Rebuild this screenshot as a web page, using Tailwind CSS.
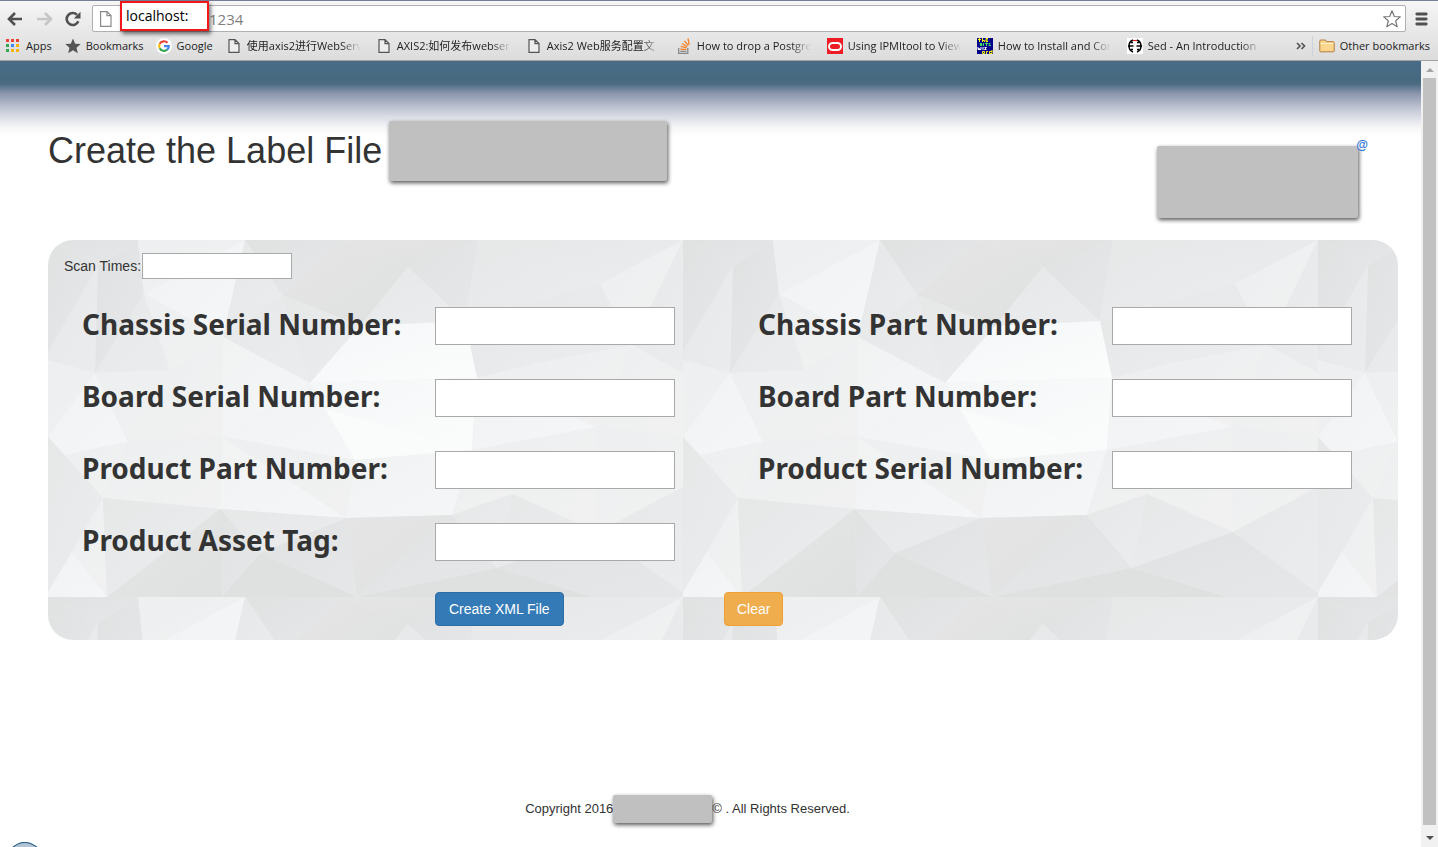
<!DOCTYPE html>
<html lang="en">
<head>
<meta charset="utf-8">
<meta name="viewport" content="width=device-width, initial-scale=1">
<title>Create the Label File</title>
<script src="https://cdn.jsdelivr.net/npm/@tailwindcss/browser@4"></script>
</head>
<body class="flex min-h-screen flex-col bg-white font-['Liberation_Sans',Arial,sans-serif] text-sm text-[#333]">

<!-- Browser toolbar -->
<header class="border-b border-[#a3a3a3] bg-linear-to-b from-[#f6f6f6] to-[#dcdcdc] font-['Open_Sans','Noto_Sans_CJK_SC',sans-serif] text-[11px] text-[#222]">
  <div class="h-px bg-[#75809a]"></div>
  <div class="relative flex h-[34px] items-center pt-px pr-2 pl-[7px]">
    <button aria-label="Back" class="mr-3.5 h-4 w-4"><svg viewBox="0 0 16 16" class="h-4 w-4" fill="none" stroke="#505050" stroke-width="2.6"><path d="M15 8H2.5M8 2L2 8l6 6"/></svg></button>
    <button aria-label="Forward" class="mr-3 h-4 w-4"><svg viewBox="0 0 16 16" class="h-4 w-4" fill="none" stroke="#c6c6c6" stroke-width="2.6"><path d="M0 8h13M8 2l6 6-6 6"/></svg></button>
    <button aria-label="Reload" class="mr-[11px] h-4 w-4"><svg viewBox="0 0 16 16" class="h-4 w-4"><path d="M13.3 10.3A6 6 0 1 1 12 3.8" fill="none" stroke="#505050" stroke-width="2.6"/><path d="M15.500 .8v6.700H8.800z" fill="#505050"/></svg></button>
    <div class="flex h-[27px] flex-1 items-center rounded-xs border border-[#b0b0b0] bg-white pr-1 pl-1.5">
      <svg viewBox="0 0 14 16" class="h-4 w-3.5 shrink-0" fill="#fff" stroke="#8a8a8a" stroke-width="1.200"><path d="M1.600.6h6.400l4 4v10.800H1.600zM8 .6v4h4"/></svg>
      <input aria-label="Address" type="text" value="1234" class="ml-[96px] h-6 min-w-0 flex-1 bg-transparent text-[15px] text-[#808080] outline-none">
      <button aria-label="Bookmark this page" class="h-[18px] w-[18px]"><svg viewBox="0 0 18 18" class="h-[18px] w-[18px]" fill="#fff" stroke="#777" stroke-width="1.200" stroke-linejoin="round"><path d="M9 .8l2.300 5.700 6 .4-4.600 3.900 1.500 6L9 13.500l-5.200 3.300 1.500-6L.7 6.900l6-.4z"/></svg></button>
    </div>
    <button aria-label="Menu" class="ml-2 h-4 w-4"><svg viewBox="0 0 16 16" class="h-4 w-4" stroke="#505050" stroke-width="2.800" stroke-linecap="round"><path d="M2.800 3h9.400M2.800 8h9.400M2.800 13h9.400"/></svg></button>
    <div class="absolute top-0 left-[120px] h-[30px] w-[89px] border-2 border-[#f01818] bg-white pl-1 text-sm leading-[26px] text-black shadow-[2px_3px_4px_#0008]">localhost:</div>
  </div>
  <nav aria-label="Bookmarks" class="flex h-[25px] items-center pr-2 pb-1 pl-1.5 leading-4 whitespace-nowrap">
    <a href="#" class="mr-[13px] flex items-center gap-1.5"><svg viewBox="0 0 14 14" class="h-3.5 w-3.5"><path d="M0 0h3v3H0zM5 0h3v3H5zM10 0h3v3h-3z" fill="#ea4335"/><path d="M0 5h3v3H0z" fill="#34a853"/><path d="M5 5h3v3H5z" fill="#4285f4"/><path d="M10 5h3v3h-3zM5 10h3v3H5zM10 10h3v3h-3z" fill="#f5b400"/><path d="M0 10h3v3H0z" fill="#34a853"/></svg>Apps</a>
    <a href="#" class="mr-3 flex items-center gap-[5px]"><svg viewBox="0 0 16 16" class="h-4 w-4" fill="#555"><path d="M8 .5l2.200 5.200 5.500.4-4.200 3.600 1.300 5.500L8 12.300l-4.800 2.900 1.300-5.500L.3 6.100l5.500-.4z"/></svg>Bookmarks</a>
    <a href="#" class="mr-3.5 flex items-center gap-[5px]"><svg viewBox="0 0 48 48" class="h-4 w-4"><circle cx="24" cy="24" r="24" fill="#fff"/><g fill="none" stroke-width="6.500"><path d="M34.500 14.500A14.500 14.500 0 0 0 11 17.500" stroke="#ea4335"/><path d="M11.200 17a14.500 14.500 0 0 0 0 14" stroke="#fbbc05"/><path d="M11 30.500a14.500 14.500 0 0 0 22.500 4.500" stroke="#34a853"/><path d="M24 24.500h14.500a14.500 14.500 0 0 1-5 10.500" stroke="#4285f4"/></g></svg>Google</a>
    <a href="#" class="mr-4 flex w-[134px] items-center gap-1.5 overflow-hidden mask-r-from-85%"><svg viewBox="0 0 14 16" class="h-4 w-3.5 shrink-0" fill="#eee" stroke="#555" stroke-width="1.200"><path d="M2 1.600h6l4 4v8.800H2zM8 1.600v4h4"/></svg>使用axis2进行WebServ</a>
    <a href="#" class="mr-4 flex w-[134px] items-center gap-1.5 overflow-hidden mask-r-from-85%"><svg viewBox="0 0 14 16" class="h-4 w-3.5 shrink-0" fill="#eee" stroke="#555" stroke-width="1.200"><path d="M2 1.600h6l4 4v8.800H2zM8 1.600v4h4"/></svg>AXIS2:如何发布webser</a>
    <a href="#" class="mr-4 flex w-[134px] items-center gap-1.5 overflow-hidden mask-r-from-85%"><svg viewBox="0 0 14 16" class="h-4 w-3.5 shrink-0" fill="#eee" stroke="#555" stroke-width="1.200"><path d="M2 1.600h6l4 4v8.800H2zM8 1.600v4h4"/></svg>Axis2 Web服务配置文</a>
    <a href="#" class="mr-4 flex w-[134px] items-center gap-1.5 overflow-hidden mask-r-from-85%"><svg viewBox="0 0 14 16" class="h-4 w-3.5 shrink-0" fill="none" stroke-width="1.300"><path d="M1.700 10v5.300h9.100V10M3.300 13.300h6" stroke="#888"/><path d="M3.300 11.200l6 .5M3.700 8.400l5.900 1.500M5 5.500l5.200 3.200M7.400 2.800l3.900 4.700M11 .5l1.200 6" stroke="#f48024"/></svg>How to drop a Postgre</a>
    <a href="#" class="mr-4 flex w-[134px] items-center gap-[5px] overflow-hidden mask-r-from-85%"><svg viewBox="0 0 16 16" class="h-4 w-4 shrink-0"><path d="M0 0h16v16H0z" fill="#ee1c24"/><rect x="2" y="5" width="12" height="7" rx="3.500" fill="none" stroke="#fff" stroke-width="2"/></svg>Using IPMItool to View</a>
    <a href="#" class="mr-4 flex w-[134px] items-center gap-[5px] overflow-hidden mask-r-from-85%"><svg viewBox="0 0 16 16" class="h-4 w-4 shrink-0" fill="none"><path d="M0 0h16v16H0z" fill="#00008b"/><path d="M1 1.500h3M2.500 0v4M5.500 0v4M5.500 2.500h2V4M11 .5H9v3h2M9 2h2" stroke="#ff0"/><path d="M5 5.500H3v1h2v1H3M6.500 5v3M8 5.500h3M9.500 4.500v3.500M13.500 5.500H12v2h2" stroke="#3fdf60"/><path d="M1 9v2.500h1V10v1.500h2V9M6 9v3M7.500 9.500h2l-2 2h2" stroke="#fff"/><path d="M5.500 13.500h2v2h-2zM9.500 16v-2.500H11M15 12v3.500h-2.500v-2H15" stroke="#ff0"/></svg>How to Install and Con</a>
    <a href="#" class="mr-4 flex w-[134px] items-center gap-[5px] overflow-hidden mask-r-from-85%"><svg viewBox="0 0 16 16" class="h-4 w-4 shrink-0" fill="none"><path d="M0 0h16v16H0z" fill="#fff"/><path d="M6 2C3.500 3 2 5 2 8s1.500 5 4 6M10 2c2.500 1 4 3 4 6s-1.500 5-4 6M1 8h5.500M9.500 8H15M4 4.500h2M10 4.500h2M4 11.500h2M10 11.500h2" stroke="#000" stroke-width="1.500"/><path d="M6 2.500h4" stroke="#e22" stroke-width="1.200"/></svg>Sed - An Introduction</a>
    <div class="ml-auto flex items-center">
      <button aria-label="More bookmarks" class="mr-1.5 h-4 w-2.5"><svg viewBox="0 0 10 16" class="h-4 w-2.5" fill="none" stroke="#555" stroke-width="1.700"><path d="M1 5l3 3-3 3M5.500 5l3 3-3 3"/></svg></button>
      <div class="mr-1.5 h-5 w-px bg-[#cbd3dc]"></div>
      <a href="#" class="flex items-center gap-[5px]"><svg viewBox="0 0 16 16" class="h-4 w-4"><path d="M.8 4V13q0 .8.800.8h12.800q.8 0 .8-.8V4.500q0-.8-.8-.8H7.500L6.500 2H2q-1.200 0-1.200 1z" fill="#fcd68c" stroke="#b27d42"/><path d="M1.500 5.500h13" stroke="#fff0c4"/></svg>Other bookmarks</a>
    </div>
  </nav>
</header>

<div class="flex flex-1">
  <main class="flex min-w-0 flex-1 flex-col bg-[linear-gradient(#486b87_0,#47697f_20px,#4c6c84_23px,#8893ab_32px,#bcc1d0_46px,#e0e2ea_58px,#f5f5f7_66px,#fff_75px)] bg-no-repeat pr-[23px] pl-12">
    <div class="flex h-[179px] items-start justify-between">
      <div class="flex items-start gap-[7px] pt-[60px]">
        <h1 class="text-4xl leading-[60px]">Create the Label File</h1>
        <div class="h-[60px] w-[278px] rounded-xs bg-[#c0c0c0] shadow-[1px_2px_4px_#000a]"></div>
      </div>
      <div class="relative mt-[85px] mr-10 h-[72px] w-[201px] rounded-xs bg-[#c0c0c0] shadow-[1px_2px_4px_#000a]">
        <a href="#" class="absolute -top-[9px] -right-2.5 text-xs leading-4 font-bold text-[#2a6fdb]">@</a>
      </div>
    </div>

    <form class="relative overflow-hidden rounded-[25px] pt-[13px] pb-3.5">
      <!-- Repeating low-poly backdrop -->
      <svg class="absolute inset-0 h-full w-full" aria-hidden="true">
        <defs>
          <linearGradient id="a" x2="1" y2="1"><stop stop-color="#e0e2e2"/><stop offset="1" stop-color="#e6e7e9"/></linearGradient>
          <linearGradient id="b" x2="1" y2="1"><stop stop-color="#e6e8e8"/><stop offset="1" stop-color="#ebecee"/></linearGradient>
          <linearGradient id="c" x2="1" y2="1"><stop stop-color="#edeff0"/><stop offset="1" stop-color="#f1f1f1"/></linearGradient>
          <linearGradient id="d" x2="1" y2="1"><stop stop-color="#f1f2f2"/><stop offset="1" stop-color="#f5f6f8"/></linearGradient>
          <linearGradient id="e" x2="1" y2="1"><stop stop-color="#f5f6f7"/><stop offset="1" stop-color="#fbfcfc"/></linearGradient>
          <linearGradient id="f" x2="1" y2="1"><stop stop-color="#e5e5e5"/><stop offset="1" stop-color="#dfe1e0"/></linearGradient>
          <pattern id="facets" width="635" height="357" patternUnits="userSpaceOnUse">
            <path fill="#eaeced" d="M0 0h635v357H0z"/>
            <path fill="url(#a)" d="M0 0h90L50 26z"/>
            <path fill="url(#a)" d="M0 0l50 26L0 112z"/>
            <path fill="url(#b)" d="M50 26L0 112v8l47 13z"/>
            <path fill="url(#a)" d="M90 0l6 54-49 79 3-107z"/>
            <path fill="url(#c)" d="M90 0h107L96 54z"/>
            <path fill="url(#d)" d="M197 0l-22 97-79-43z"/>
            <path fill="url(#b)" d="M96 54L47 133l75-3z"/>
            <path fill="url(#c)" d="M96 54l79 43-53 33z"/>
            <path fill="url(#a)" d="M197 0h97l-60 55z"/>
            <path fill="url(#b)" d="M197 0l37 55-59 42z"/>
            <path fill="url(#b)" d="M234 55l28 88-87-46z"/>
            <path fill="url(#f)" d="M294 0l66 27-48 59-78-31z"/>
            <path fill="url(#b)" d="M234 55l78 31-50 57z"/>
            <path fill="url(#f)" d="M294 0h136l-70 27z"/>
            <path fill="url(#b)" d="M360 27l57 54-105 5z"/>
            <path fill="url(#a)" d="M430 0l-13 81-57-54z"/>
            <path fill="url(#b)" d="M430 0l122 44-135 37z"/>
            <path fill="url(#b)" d="M430 0h205l-83 44z"/>
            <path fill="url(#b)" d="M552 44l32 61-90 17-77-41z"/>
            <path fill="url(#c)" d="M635 0L584 105l-32-61z"/>
            <path fill="url(#b)" d="M635 0v133l-51-28z"/>
            <path fill="url(#b)" d="M417 81l77 41-65 16z"/>
            <path fill="url(#c)" d="M0 120l47 13 33 69-80-5z"/>
            <path fill="url(#d)" d="M47 133L0 197l17 18 63-13z"/>
            <path fill="url(#c)" d="M47 133l75-3 53 67-95 5z"/>
            <path fill="url(#c)" d="M122 130l53-33v100z"/>
            <path fill="url(#d)" d="M175 97l87 46-87 54z"/>
            <path fill="url(#d)" d="M262 143l45 77-132-23z"/>
            <path fill="url(#e)" d="M262 143l50-57 105-5 12 57z"/>
            <path fill="url(#e)" d="M262 143l167-5-5 72-117 10z"/>
            <path fill="#fafbfb" d="M277 169l147 41-117 10z"/>
            <path fill="url(#c)" d="M494 122l55 65-120-49z"/>
            <path fill="url(#d)" d="M429 138l120 49-125 23z"/>
            <path fill="url(#c)" d="M584 105l-35 82-55-65z"/>
            <path fill="url(#c)" d="M584 105l51 28v64l-86-10z"/>
            <path fill="url(#b)" d="M0 197l55 61-31 54L0 352z"/>
            <path fill="url(#c)" d="M17 215l63-13-25 56z"/>
            <path fill="url(#c)" d="M80 202l95-5-3 72-117-11z"/>
            <path fill="url(#d)" d="M175 197l123 81-126-9z"/>
            <path fill="url(#c)" d="M175 197l132 23-9 58z"/>
            <path fill="url(#d)" d="M307 220l117-10-20 65-106 3z"/>
            <path fill="url(#c)" d="M424 210l40 44-60 21z"/>
            <path fill="url(#c)" d="M424 210l125-23 1 105-86-38z"/>
            <path fill="url(#c)" d="M549 187l86 10v50l-85 45z"/>
            <path fill="url(#d)" d="M24 312l35 45H0v-5z"/>
            <path fill="url(#c)" d="M55 258l4 99-35-45z"/>
            <path fill="url(#b)" d="M55 258l117 11L59 357z"/>
            <path fill="url(#f)" d="M172 269l2 88H59z"/>
            <path fill="url(#a)" d="M172 269l40 44-38 44z"/>
            <path fill="url(#b)" d="M172 269l126 9-86 35z"/>
            <path fill="url(#a)" d="M298 278l11 79-97-44z"/>
            <path fill="#dfe0e0" d="M212 313l97 44H174z"/>
            <path fill="url(#f)" d="M298 278l106-3-95 82z"/>
            <path fill="url(#a)" d="M404 275l45 53-140 29z"/>
            <path fill="url(#b)" d="M404 275l60-21-15 74z"/>
            <path fill="url(#b)" d="M464 254l86 38-101 36z"/>
            <path fill="url(#a)" d="M550 292l85 61v4H544l-95-29z"/>
            <path fill="#dfe1e0" d="M309 357l140-29 95 29z"/>
            <path fill="url(#b)" d="M550 292l85-45v106z"/>
          </pattern>
        </defs>
        <rect width="100%" height="100%" fill="url(#facets)"/>
      </svg>

      <div class="relative">
        <div class="mb-7 flex h-[26px] items-center gap-px pl-4">
          <label for="scan">Scan Times:</label>
          <input id="scan" type="text" class="h-[26px] w-[150px] border border-[#a9a9a9] bg-white px-1">
        </div>
        <div class="grid grid-cols-2 gap-x-0.5 gap-y-[34px]">
          <div class="flex items-center pl-[34px]"><label for="cs" class="w-[353px] pb-[3px] font-['Noto_Sans',sans-serif] text-[28px] leading-[35px] font-bold whitespace-nowrap">Chassis Serial Number:</label><input id="cs" type="text" class="h-[38px] w-60 border border-[#a9a9a9] bg-white px-2"></div>
          <div class="flex items-center pl-[34px]"><label for="cp" class="w-[354px] pb-[3px] font-['Noto_Sans',sans-serif] text-[28px] leading-[35px] font-bold whitespace-nowrap">Chassis Part Number:</label><input id="cp" type="text" class="h-[38px] w-60 border border-[#a9a9a9] bg-white px-2"></div>
          <div class="flex items-center pl-[34px]"><label for="bs" class="w-[353px] pb-[3px] font-['Noto_Sans',sans-serif] text-[28px] leading-[35px] font-bold whitespace-nowrap">Board Serial Number:</label><input id="bs" type="text" class="h-[38px] w-60 border border-[#a9a9a9] bg-white px-2"></div>
          <div class="flex items-center pl-[34px]"><label for="bp" class="w-[354px] pb-[3px] font-['Noto_Sans',sans-serif] text-[28px] leading-[35px] font-bold whitespace-nowrap">Board Part Number:</label><input id="bp" type="text" class="h-[38px] w-60 border border-[#a9a9a9] bg-white px-2"></div>
          <div class="flex items-center pl-[34px]"><label for="pp" class="w-[353px] pb-[3px] font-['Noto_Sans',sans-serif] text-[28px] leading-[35px] font-bold whitespace-nowrap">Product Part Number:</label><input id="pp" type="text" class="h-[38px] w-60 border border-[#a9a9a9] bg-white px-2"></div>
          <div class="flex items-center pl-[34px]"><label for="ps" class="w-[354px] pb-[3px] font-['Noto_Sans',sans-serif] text-[28px] leading-[35px] font-bold whitespace-nowrap">Product Serial Number:</label><input id="ps" type="text" class="h-[38px] w-60 border border-[#a9a9a9] bg-white px-2"></div>
          <div class="flex items-center pl-[34px]"><label for="at" class="w-[353px] pb-[3px] font-['Noto_Sans',sans-serif] text-[28px] leading-[35px] font-bold whitespace-nowrap">Product Asset Tag:</label><input id="at" type="text" class="h-[38px] w-60 border border-[#a9a9a9] bg-white px-2"></div>
        </div>
        <div class="mt-[31px] grid grid-cols-2 gap-x-0.5">
          <div class="pl-[387px]"><button type="button" class="block h-[34px] rounded-sm border border-[#2e6da4] bg-[#337ab7] px-[13px] text-white">Create XML File</button></div>
          <div><button type="reset" class="block h-[34px] rounded-sm border border-[#eea236] bg-[#f0ad4e] px-3 text-white">Clear</button></div>
        </div>
      </div>
    </form>

    <footer class="flex items-center justify-center pt-[155px] pr-[71px] pb-6 text-[13px] leading-7">
      <span>Copyright 2016</span>
      <span class="h-7 w-[99px] rounded-xs bg-[#c0c0c0] shadow-[1px_2px_4px_#000a]"></span>
      <span>© . All Rights Reserved.</span>
    </footer>
  </main>

  <!-- Scrollbar -->
  <div class="flex w-[17px] flex-col items-center bg-[#f1f1f1]" aria-hidden="true">
    <svg viewBox="0 0 17 17" class="h-[17px] w-[17px]"><path d="M5 11h8L9 7z" fill="#a3a3a3"/></svg>
    <div class="w-[13px] flex-1 bg-[#c1c1c1]"></div>
    <svg viewBox="0 0 17 22" class="h-[22px] w-[17px]"><path d="M5 11h8l-4 4z" fill="#505050"/></svg>
  </div>
</div>

<!-- Taskbar edge with the start orb behind it -->
<div class="relative h-px bg-[linear-gradient(90deg,#27435c_0_58px,#0c1016_58px_145px,#27435c_145px_195px,#0c1016_195px_237px,#27435c_237px_426px,#0c1016_426px_467px,#27435c_467px_518px,#0c1016_518px_788px,#27435c_788px)]">
  <svg viewBox="0 0 26 6" class="absolute bottom-0 left-3 h-1.5 w-[26px]" aria-hidden="true"><path d="M0 6Q12.500-5 26 6z" fill="#b3c5d5" stroke="#28608c" stroke-width="1.200"/></svg>
</div>
</body>
</html>
